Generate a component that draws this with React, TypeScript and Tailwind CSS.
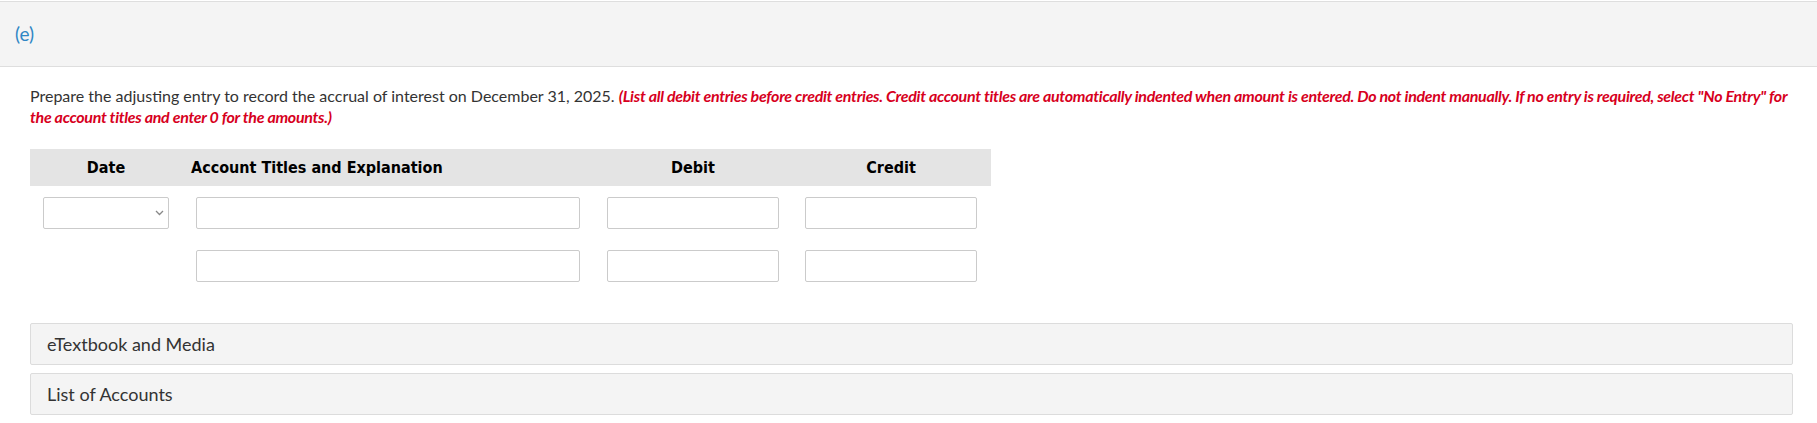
const lato = { fontFamily: "Lato, 'Open Sans', sans-serif" };

function Field({ w }: { w: string }) {
  return <input type="text" className={`${w} h-[32px] rounded-[2px] border border-[#cbcbcb] bg-white outline-none`} />;
}

function Accordion({ label }: { label: string }) {
  return (
    <div className="flex h-[42px] items-center rounded-[2px] border border-[#dcdcdc] bg-[#f4f4f4] pl-4 text-[18px] text-[#333]">
      {label}
    </div>
  );
}

export default function App() {
  return (
    <div className="min-h-[423px] bg-white" style={lato}>
      <div className="mt-px flex h-[66px] items-center border-y border-[#dedede] bg-[#f4f4f4] pl-[15px]">
        <span className="text-[19px] text-[#2f86c4]">(e)</span>
      </div>

      <div className="pl-[30px] pr-[24px]">
        <p className="mt-[18px] text-[16px] leading-[21px] text-[#333]">
          Prepare the adjusting entry to record the accrual of interest on December 31, 2025.{" "}
          <em className="font-bold tracking-[-0.3px] text-[#d7001d]">
            (List all debit entries before credit entries. Credit account titles are automatically indented when amount is entered. Do not indent manually. If no entry is required, select "No Entry" for the account titles and enter 0 for the amounts.)
          </em>
        </p>

        <div className="mt-[22px] w-[961px]">
          <div
            className="grid h-[37px] grid-cols-[152px_413px_196px_200px] items-center bg-[#e4e4e4] text-[16px] font-bold text-black"
            style={{ fontFamily: "'DejaVu Sans Condensed', Tahoma, 'DejaVu Sans', sans-serif" }}
          >
            <div className="text-center">Date</div>
            <div className="pl-[9px]">Account Titles and Explanation</div>
            <div className="text-center">Debit</div>
            <div className="text-center">Credit</div>
          </div>

          <div className="mt-[11px] grid grid-cols-[152px_413px_196px_200px] items-start gap-y-[21px]">
            <div className="flex justify-center">
              <div className="flex h-[32px] w-[126px] items-center justify-end rounded-[2px] border border-[#cbcbcb] bg-white pr-[4px]">
                <svg width="9" height="6" viewBox="0 0 9 6" fill="none">
                  <polyline points="1,1 4.5,4.5 8,1" stroke="#888" strokeWidth="1.3" />
                </svg>
              </div>
            </div>
            <div className="pl-[14px]"><Field w="w-[384px]" /></div>
            <div className="flex justify-center"><Field w="w-[172px]" /></div>
            <div className="flex justify-center"><Field w="w-[172px]" /></div>

            <div />
            <div className="pl-[14px]"><Field w="w-[384px]" /></div>
            <div className="flex justify-center"><Field w="w-[172px]" /></div>
            <div className="flex justify-center"><Field w="w-[172px]" /></div>
          </div>
        </div>

        <div className="mt-[41px] flex flex-col gap-2">
          <Accordion label="eTextbook and Media" />
          <Accordion label="List of Accounts" />
        </div>
      </div>
    </div>
  );
}
